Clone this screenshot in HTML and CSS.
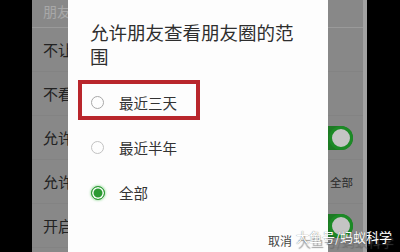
FILE: index.html
```html
<!DOCTYPE html>
<html lang="zh">
<head>
<meta charset="utf-8">
<link rel="stylesheet" href="styles.css">
</head>
<body>
<div class="frame">
  <div class="bezel"></div>
  <div class="screen">
    <div class="section-label">朋友</div>
    <div class="row"><span>不让</span></div>
    <div class="row"><span>不看</span></div>
    <div class="row"><span>允许</span><span class="toggle"></span></div>
    <div class="row"><span>允许</span><span class="value">全部</span></div>
    <div class="row"><span>开启</span><span class="toggle"></span></div>

    <div class="dialog">
      <p class="title">允许朋友查看朋友圈的范围</p>
      <div class="options">
        <div class="option"><span class="mark"></span><span class="radio"></span><span>最近三天</span></div>
        <div class="option"><span class="radio light"></span><span>最近半年</span></div>
        <div class="option"><span class="radio checked"></span><span>全部</span></div>
      </div>
      <div class="actions"><span class="cancel">取消</span></div>
    </div>
  </div>
  <div class="bezel right"></div>
  <div class="watermark">大鱼号/蚂蚁科学</div>
</div>
</body>
</html>
```
FILE: styles.css
```css
html, body {
  margin: 0;
  padding: 0;
}
body {
  width: 400px;
  height: 252px;
  overflow: hidden;
  background: #000;
  font-family: "Noto Sans CJK SC", "Noto Sans", sans-serif;
}
.frame {
  position: relative;
  display: flex;
  height: 252px;
}
.bezel {
  width: 32px;
  background: #000;
}
.bezel.right {
  flex: 1;
}
.screen {
  position: relative;
  width: 331px;
  background: #888888;
  border-right: 4px solid #a2a2a2;
  overflow: hidden;
}
.section-label {
  height: 27px;
  padding-left: 11px;
  font-size: 14px;
  line-height: 23px;
  color: #a8a8a8;
  border-bottom: 1px solid #9a9a9a;
  white-space: nowrap;
}
.row {
  height: 43px;
  display: flex;
  align-items: center;
  justify-content: space-between;
  padding: 0 10px 0 11px;
  font-size: 15px;
  color: #222;
  border-bottom: 1px solid #838383;
  white-space: nowrap;
}
.value {
  font-size: 11.5px;
  color: #2a2a2a;
}
.toggle {
  position: relative;
  width: 44px;
  height: 24px;
  border-radius: 12px;
  background: #1d7a24;
  flex: none;
}
.toggle::after {
  content: "";
  position: absolute;
  right: 0;
  top: 0;
  width: 18px;
  height: 18px;
  border-radius: 50%;
  background: #c4c4c4;
  border: 3px solid #1c8a26;
}
.dialog {
  position: absolute;
  left: 36px;
  top: 0;
  width: 214px;
  height: 252px;
  padding: 20px 24px 0 22px;
  background: #fdfdfd;
}
.title {
  margin: 0;
  font-size: 18.5px;
  line-height: 24px;
  color: #2e2e2e;
}
.options {
  margin-top: 12px;
}
.option {
  position: relative;
  height: 45px;
  display: flex;
  align-items: center;
  padding-left: 1px;
  font-size: 14.5px;
  color: #333;
}
.radio {
  width: 11px;
  height: 11px;
  border-radius: 50%;
  border: 1.5px solid #a8a8a8;
  margin-right: 15px;
  flex: none;
}
.radio.light {
  border-color: #c2c2c2;
}
.radio.checked {
  width: 12px;
  height: 12px;
  border-color: #2b9a33;
  background: #2b9a33;
  box-shadow: inset 0 0 0 1.5px #fff, 0 0 2px 1px rgba(60, 190, 70, 0.35);
  margin-right: 14px;
}
.mark {
  position: absolute;
  left: -12px;
  top: 0;
  width: 122px;
  height: 40px;
  box-sizing: border-box;
  border: 4px solid #b9262c;
}
.actions {
  display: flex;
  justify-content: flex-end;
  margin-top: 16px;
}
.cancel {
  font-size: 12px;
  line-height: 20px;
  color: #444;
  margin-right: 12px;
}
.watermark {
  position: absolute;
  left: 296px;
  top: 228px;
  font-size: 13px;
  line-height: 18px;
  color: #fff;
  white-space: nowrap;
  text-shadow: 0 0 1px rgba(70, 70, 70, 0.9), 2px 5px 1px rgba(90, 90, 90, 0.6);
}
```
